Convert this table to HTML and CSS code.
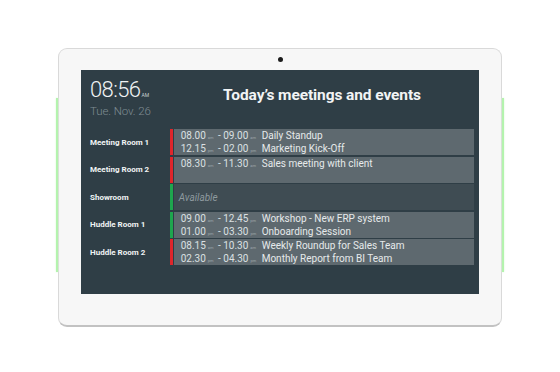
FILE: index.html
```html
<!DOCTYPE html>
<html lang="en">
<head>
<meta charset="utf-8">
<title>Today's meetings and events</title>
<link rel="stylesheet" href="styles.css">
</head>
<body>
<div class="stage">
  <div class="device">
    <div class="bezel-top"><span class="camera"></span></div>
    <div class="screen">
      <div class="header">
        <div class="clock">
          <div class="time">08:56<span class="ampm">AM</span></div>
          <div class="date">Tue. Nov. 26</div>
        </div>
        <h1 class="title">Today’s meetings and events</h1>
      </div>
      <div class="rooms">
        <div class="room">Meeting Room 1</div>
        <div class="slot busy">
          <div class="events">
            <div class="event"><span class="when">08.00<small>am</small> - 09.00<small>am</small></span><span class="what">Daily Standup</span></div>
            <div class="event"><span class="when">12.15<small>pm</small> - 02.00<small>pm</small></span><span class="what">Marketing Kick-Off</span></div>
          </div>
        </div>

        <div class="room">Meeting Room 2</div>
        <div class="slot busy">
          <div class="events">
            <div class="event"><span class="when">08.30<small>am</small> - 11.30<small>am</small></span><span class="what">Sales meeting with client</span></div>
          </div>
        </div>

        <div class="room">Showroom</div>
        <div class="slot free">
          <div class="events empty">
            <div class="available">Available</div>
          </div>
        </div>

        <div class="room">Huddle Room 1</div>
        <div class="slot free">
          <div class="events">
            <div class="event"><span class="when">09.00<small>am</small> - 12.45<small>pm</small></span><span class="what">Workshop - New ERP system</span></div>
            <div class="event"><span class="when">01.00<small>pm</small> - 03.30<small>pm</small></span><span class="what">Onboarding Session</span></div>
          </div>
        </div>

        <div class="room">Huddle Room 2</div>
        <div class="slot busy">
          <div class="events">
            <div class="event"><span class="when">08.15<small>am</small> - 10.30<small>am</small></span><span class="what">Weekly Roundup for Sales Team</span></div>
            <div class="event"><span class="when">02.30<small>pm</small> - 04.30<small>pm</small></span><span class="what">Monthly Report from BI Team</span></div>
          </div>
        </div>
      </div>
    </div>
  </div>
</div>
</body>
</html>
```

FILE: styles.css
```css
* { box-sizing: border-box; }

html, body {
  margin: 0;
  padding: 0;
  background: #ffffff;
}

body {
  font-family: Roboto, "Liberation Sans", sans-serif;
  width: 560px;
  height: 372px;
  overflow: hidden;
}

.stage {
  padding: 48px 0 0 58px;
}

.device {
  position: relative;
  width: 444px;
  height: 279px;
  display: flex;
  flex-direction: column;
  padding: 0 22px;
  background: #f7f7f7;
  border: 1px solid #d9d9d9;
  border-bottom: 2px solid #c2c2c2;
  border-radius: 9px;
}

.device::before,
.device::after {
  content: "";
  position: absolute;
  top: 49px;
  width: 2px;
  height: 174px;
  background: #b4f3ae;
  box-shadow: 0 0 2px #d3f8cf;
}

.device::before { left: -3px; }
.device::after { right: -3px; }

.bezel-top {
  height: 21px;
  display: flex;
  align-items: center;
  justify-content: center;
}

.camera {
  width: 5px;
  height: 5px;
  border-radius: 50%;
  background: #1c1c1c;
}

.screen {
  width: 398px;
  height: 224px;
  background: #2f3e46;
  color: #e9edee;
}

.header {
  display: grid;
  grid-template-columns: 89px 1fr;
  height: 59px;
  padding-right: 5px;
}

.clock {
  padding: 10px 0 0 9px;
  white-space: nowrap;
}

.time {
  font-size: 22px;
  font-weight: 300;
  line-height: 20px;
  letter-spacing: -0.6px;
  color: #f0f3f4;
}

.ampm {
  font-size: 5px;
  font-weight: 400;
  letter-spacing: 0;
  margin-left: 1px;
  color: #c9d0d3;
}

.date {
  font-size: 11.5px;
  font-weight: 300;
  line-height: 13px;
  color: #7f8d93;
  letter-spacing: -0.1px;
}

.title {
  margin: 0;
  padding-top: 15px;
  text-align: center;
  font-size: 15.5px;
  line-height: 20px;
  font-weight: 700;
  color: #f2f4f5;
  letter-spacing: -0.1px;
}

.rooms {
  display: grid;
  grid-template-columns: 89px 1fr;
  grid-auto-rows: 26px;
  row-gap: 1.5px;
  padding-right: 5px;
}

.room {
  display: flex;
  align-items: center;
  padding-left: 9px;
  font-size: 8px;
  font-weight: 700;
  color: #f1f4f5;
}

.slot {
  display: flex;
  border-left: 3.3px solid #e0262b;
}

.slot.free { border-left-color: #1ea64e; }

.events {
  flex: 1;
  margin-left: 0.7px;
  background: #5e696f;
  padding: 0 0 0 7px;
}

.events.empty {
  background: #3f4c53;
  display: flex;
  align-items: center;
  padding-left: 5px;
}

.event {
  display: flex;
  height: 13px;
  line-height: 13px;
  font-size: 10px;
  color: #dbe0e2;
  white-space: nowrap;
}

.when {
  width: 81px;
  flex: none;
}

.when small {
  font-size: 4px;
  margin: 0 2px 0 2px;
  color: #9ea8ac;
}

.what {
  color: #e6eaeb;
}

.available {
  font-size: 10px;
  font-style: italic;
  color: #8e9a9f;
}
```
